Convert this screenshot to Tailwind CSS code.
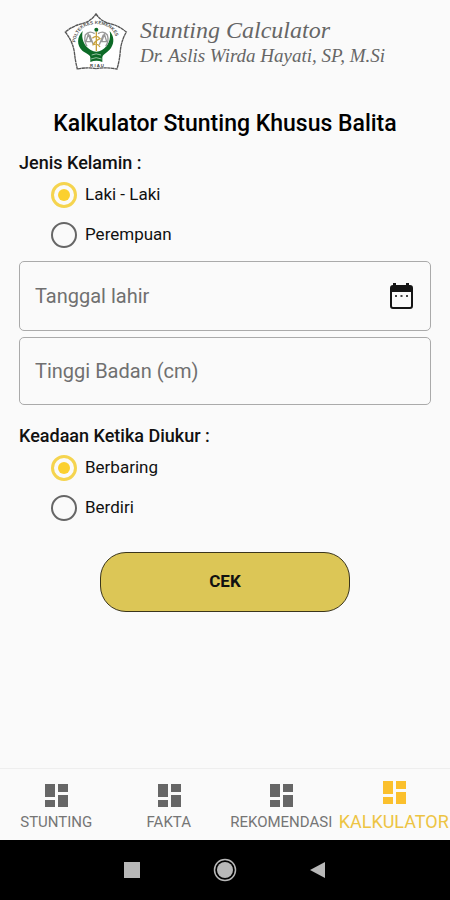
<!DOCTYPE html>
<html lang="id">
<head>
<meta charset="utf-8">
<meta name="viewport" content="width=device-width, initial-scale=1">
<title>Stunting Calculator</title>
<script src="https://cdn.jsdelivr.net/npm/@tailwindcss/browser@4"></script>
</head>
<body class="flex min-h-screen flex-col bg-[#fafafa] font-['Roboto',sans-serif] text-[#111]">
<svg class="hidden" aria-hidden="true">
  <symbol id="dashboard" viewBox="0 0 24 24"><path fill="currentColor" d="M1 1h10v13H1zM14 1h10v8H14zM1 17h10v7H1zM14 12h10v12H14z"/></symbol>
</svg>

<header class="flex items-start gap-3 pt-3 pl-16">
  <svg class="h-[61px] w-16 shrink-0" viewBox="28 22 192 183" role="img" aria-label="Logo Poltekkes Kemenkes Riau">
    <path d="M124 28 Q140 51 166 57 Q190 62 215 82 Q200 108 197 138 Q195 166 187 193 Q155 187 124 192 Q96 187 68 193 Q62 170 59 142 Q54 110 32 82 Q54 64 82 57 Q108 51 124 28Z" fill="#fff" stroke="#555" stroke-width="4" stroke-dasharray="10 1"/>
    <path id="arc" d="M62 114 Q70 60 124 58 Q180 60 188 114" fill="none"/>
    <text font-family="Liberation Sans, sans-serif" font-size="14" font-weight="700" fill="#555"><textPath href="#arc">POLTEKKES KEMENKES</textPath></text>
    <path d="M84 79 C66 98 66 122 83 138 C94 147 105 148 108 158 H142 C146 147 160 143 169 130 C180 113 178 94 165 79 C170 104 160 126 142 136 Q125 147 108 136 C88 124 79 102 84 79Z" fill="#0d6b27"/>
    <path d="M107 146 H143 V172 Q125 164 107 172Z" fill="#0d6b27"/>
    <path d="M111 151 Q124 144 139 151M109 163 Q124 155 141 163" stroke="#d9eadc" stroke-width="2" fill="none"/>
    <circle cx="125" cy="75" r="6" fill="#0d6b27"/>
    <path d="M120 87 Q103 76 92 91 Q87 109 97 125 M130 87 Q147 76 158 91 Q164 109 153 125 M101 88 L94 111 H109Z M149 88 L141 111 H156Z M105 90 L116 120 M146 90 L134 120" fill="none" stroke="#999" stroke-width="4"/>
    <path d="M125 82V139M113 101 Q126 89 136 102 Q119 110 116 120 Q129 115 136 127" fill="none" stroke="#c9a33c" stroke-width="4"/>
    <text x="127" y="186" text-anchor="middle" font-family="Liberation Sans, sans-serif" font-size="13" font-weight="700" fill="#444">R I A U</text>
  </svg>
  <div class="pt-1 font-['Liberation_Serif',serif] whitespace-nowrap text-[#666] italic">
    <p class="text-2xl leading-7">Stunting Calculator</p>
    <p class="text-[19px] leading-6">Dr. Aslis Wirda Hayati, SP, M.Si</p>
  </div>
</header>

<main class="flex grow flex-col px-[19px] pt-[37px]">
  <h1 class="text-center text-[23px] leading-7 font-medium text-black">Kalkulator Stunting Khusus Balita</h1>
  <form class="mt-[13px] flex flex-col">
    <fieldset>
      <legend class="text-lg leading-6 font-medium">Jenis Kelamin :</legend>
      <label class="flex h-10 items-center gap-2 pl-8 text-[17px]"><input type="radio" name="kelamin" checked class="grid size-[26px] appearance-none place-items-center rounded-full border-2 border-[#666] checked:border-3 checked:border-[#f5d44f] checked:before:size-3 checked:before:rounded-full checked:before:bg-[#fbd02f] checked:before:content-['']">Laki - Laki</label>
      <label class="flex h-10 items-center gap-2 pl-8 text-[17px]"><input type="radio" name="kelamin" class="grid size-[26px] appearance-none place-items-center rounded-full border-2 border-[#666] checked:border-3 checked:border-[#f5d44f] checked:before:size-3 checked:before:rounded-full checked:before:bg-[#fbd02f] checked:before:content-['']">Perempuan</label>
    </fieldset>
    <div class="mt-1.5 flex h-[70px] items-center rounded-[5px] border border-[#aaa] pr-4">
      <input type="text" aria-label="Tanggal lahir" placeholder="Tanggal lahir" class="h-full min-w-0 grow bg-transparent px-[15px] text-xl outline-none placeholder:text-[#707070]">
      <button type="button" aria-label="Pilih tanggal" class="text-[#151515]">
        <svg class="size-[26px]" viewBox="0 0 26 26"><path fill="currentColor" fill-rule="evenodd" d="M5 0h3v2h10V0h3v2h1q3 0 3 3v18q0 3-3 3H5q-3 0-3-3V5q0-3 3-3zM4 9v14q0 1 1 1h17q1 0 1-1V9z"/><path fill="#444" d="M7 12h2v2H7zM12.500 12h2v2h-2zM18 12h2v2h-2z"/></svg>
      </button>
    </div>
    <input type="text" inputmode="decimal" aria-label="Tinggi Badan (cm)" placeholder="Tinggi Badan (cm)" class="mt-1.5 h-[68px] rounded-[5px] border border-[#aaa] px-[15px] text-xl outline-none placeholder:text-[#707070]">
    <fieldset class="mt-[19px]">
      <legend class="text-lg leading-6 font-medium">Keadaan Ketika Diukur :</legend>
      <label class="flex h-10 items-center gap-2 pl-8 text-[17px]"><input type="radio" name="posisi" checked class="grid size-[26px] appearance-none place-items-center rounded-full border-2 border-[#666] checked:border-3 checked:border-[#f5d44f] checked:before:size-3 checked:before:rounded-full checked:before:bg-[#fbd02f] checked:before:content-['']">Berbaring</label>
      <label class="flex h-10 items-center gap-2 pl-8 text-[17px]"><input type="radio" name="posisi" class="grid size-[26px] appearance-none place-items-center rounded-full border-2 border-[#666] checked:border-3 checked:border-[#f5d44f] checked:before:size-3 checked:before:rounded-full checked:before:bg-[#fbd02f] checked:before:content-['']">Berdiri</label>
    </fieldset>
    <button type="submit" class="mx-auto mt-6 h-[60px] w-[250px] rounded-[26px] border border-[#3a351c] bg-[#dcc656] text-[17px] font-bold">CEK</button>
  </form>
</main>

<nav class="grid h-[72px] grid-cols-4 border-t border-[#eee] text-[15px] leading-5 text-[#757575]">
  <a href="#stunting" class="flex flex-col items-center gap-[5px] pt-3.5"><svg class="size-6 text-[#666]"><use href="#dashboard"/></svg>STUNTING</a>
  <a href="#fakta" class="flex flex-col items-center gap-[5px] pt-3.5"><svg class="size-6 text-[#666]"><use href="#dashboard"/></svg>FAKTA</a>
  <a href="#rekomendasi" class="flex flex-col items-center gap-[5px] pt-3.5"><svg class="size-6 text-[#666]"><use href="#dashboard"/></svg>REKOMENDASI</a>
  <a href="#kalkulator" aria-current="page" class="flex flex-col items-center gap-[5px] pt-[11px] text-lg leading-[26px] text-[#edc443]"><svg class="size-6 text-[#fbc02d]"><use href="#dashboard"/></svg>KALKULATOR</a>
</nav>

<div class="flex h-[60px] items-center justify-center gap-[73px] bg-black text-[#b8b8b8]">
  <button type="button" aria-label="Aplikasi terbaru"><svg class="size-4" viewBox="0 0 16 16"><path fill="currentColor" d="M0 0h16v16H0z"/></svg></button>
  <button type="button" aria-label="Beranda"><svg class="size-6" viewBox="0 0 24 24"><circle cx="12" cy="12" r="10.500" fill="none" stroke="currentColor" stroke-width="1.500"/><circle cx="12" cy="12" r="8" fill="currentColor"/></svg></button>
  <button type="button" aria-label="Kembali"><svg class="size-4" viewBox="0 0 16 16"><path fill="currentColor" d="M15 0v16L0 8z"/></svg></button>
</div>
</body>
</html>
